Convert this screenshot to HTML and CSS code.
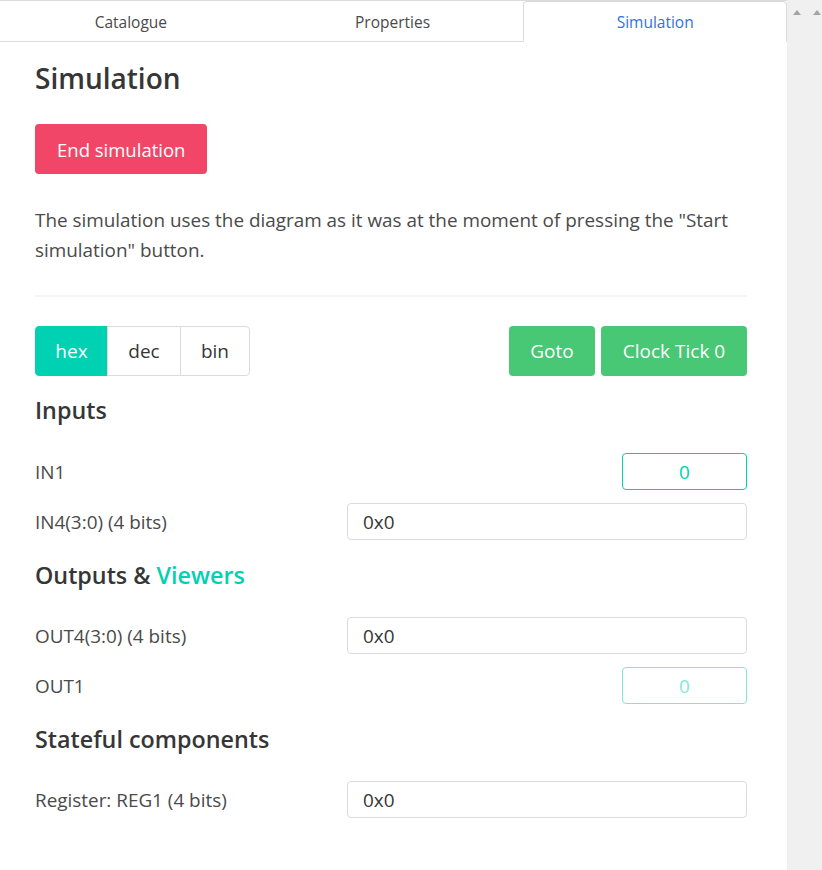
FILE: index.html
```html
<!DOCTYPE html>
<html>
<head>
<meta charset="utf-8">
<link rel="stylesheet" href="styles.css">
</head>
<body>
<div class="layout">
  <div class="panel">
    <div class="tabs">
      <div class="tab">Catalogue</div>
      <div class="tab">Properties</div>
      <div class="tab active">Simulation</div>
    </div>
    <div class="content">
      <h1 class="title">Simulation</h1>
      <button class="btn btn-danger">End simulation</button>
      <p class="desc">The simulation uses the diagram as it was at the moment of pressing the "Start simulation" button.</p>
      <hr class="divider">
      <div class="toolbar">
        <div class="seg">
          <button class="seg-btn selected">hex</button>
          <button class="seg-btn">dec</button>
          <button class="seg-btn">bin</button>
        </div>
        <div class="actions">
          <button class="btn btn-success">Goto</button>
          <button class="btn btn-success">Clock Tick 0</button>
        </div>
      </div>

      <h2 class="section first">Inputs</h2>
      <div class="row">
        <span class="label">IN1</span>
        <span class="bit">0</span>
      </div>
      <div class="row">
        <span class="label">IN4(3:0) (4 bits)</span>
        <span class="field">0x0</span>
      </div>

      <h2 class="section">Outputs &amp; <span class="accent">Viewers</span></h2>
      <div class="row">
        <span class="label">OUT4(3:0) (4 bits)</span>
        <span class="field">0x0</span>
      </div>
      <div class="row">
        <span class="label">OUT1</span>
        <span class="bit disabled">0</span>
      </div>

      <h2 class="section">Stateful components</h2>
      <div class="row">
        <span class="label">Register: REG1 (4 bits)</span>
        <span class="field">0x0</span>
      </div>
    </div>
  </div>
  <div class="side">
    <span class="tri"></span>
    <span class="tri"></span>
  </div>
</div>
</body>
</html>
```

FILE: styles.css
```css
* { box-sizing: border-box; }
html, body { margin: 0; padding: 0; background: #fff; }
body {
  font-family: "Open Sans", "Noto Sans", sans-serif;
  color: #4a4a4a;
  font-size: 16px;
}
.layout {
  display: flex;
  height: 870px;
  overflow: hidden;
}
.panel {
  width: 787px;
  flex: 0 0 787px;
}
.side {
  flex: 1;
  background: #f0f0f0;
  display: flex;
  gap: 12px;
  padding: 10px 0 0 6px;
  align-items: flex-start;
}
.tri {
  width: 0; height: 0;
  border-left: 4px solid transparent;
  border-right: 4px solid transparent;
  border-bottom: 5px solid #a3a3a3;
}
.tabs {
  display: flex;
  height: 42px;
  border-top: 1px solid #dbdbdb;
}
.tab {
  flex: 1;
  display: flex;
  align-items: center;
  justify-content: center;
  font-size: 15.5px;
  color: #4a4a4a;
  border-bottom: 1px solid #dbdbdb;
  padding-top: 1px;
}
.tab.active {
  color: #3273dc;
  border: 1px solid #dbdbdb;
  border-bottom-color: transparent;
  border-radius: 4px 4px 0 0;
}
.content {
  padding: 16px 40px 0 35px;
}
.title {
  margin: 0;
  font-size: 28px;
  font-weight: 600;
  color: #363636;
  line-height: 40px;
}
.btn {
  font-family: inherit;
  font-size: 18.5px;
  border: none;
  border-radius: 4px;
  color: #fff;
  height: 50px;
  padding: 0 22px;
  cursor: pointer;
}
.btn-danger {
  background: #f14668;
  margin-top: 26px;
  display: block;
}
.btn-success { background: #48c774; }
.desc {
  margin: 31px 0 0;
  font-size: 18.9px;
  line-height: 30px;
  color: #4a4a4a;
}
.divider {
  border: none;
  height: 2px;
  background: #f5f5f5;
  margin: 30px 0 29px;
}
.toolbar {
  display: flex;
  justify-content: space-between;
  align-items: center;
}
.seg { display: flex; }
.seg-btn {
  font-family: inherit;
  font-size: 19px;
  height: 50px;
  background: #fff;
  color: #363636;
  border: 1px solid #dbdbdb;
  margin-left: -1px;
  padding: 0;
}
.seg-btn:first-child { border-radius: 4px 0 0 4px; margin-left: 0; width: 73px; }
.seg-btn:nth-child(2) { width: 74px; }
.seg-btn:last-child { border-radius: 0 4px 4px 0; width: 70px; }
.seg-btn.selected {
  background: #00d1b2;
  border-color: #00d1b2;
  color: #fff;
}
.actions { display: flex; gap: 6px; }
.actions .btn { font-size: 19px; padding: 0; }
.actions .btn:first-child { width: 86px; }
.actions .btn:last-child { width: 146px; }
.section {
  margin: 20px 0 27px;
  font-size: 23.3px;
  font-weight: 600;
  color: #363636;
  line-height: 30px;
}
.section.first { margin-top: 19px; margin-bottom: 28px; }
.accent { color: #00d1b2; }
.row {
  display: flex;
  align-items: center;
  justify-content: space-between;
  height: 37px;
  margin-bottom: 13px;
}
.label {
  font-size: 18.9px;
  color: #4a4a4a;
}
.field {
  width: 400px;
  height: 37px;
  border: 1px solid #dbdbdb;
  border-radius: 4px;
  display: flex;
  align-items: center;
  padding-left: 15px;
  font-size: 18.9px;
  color: #363636;
}
.bit {
  width: 125px;
  height: 37px;
  border: 1px solid #00d1b2;
  border-radius: 4px;
  display: flex;
  align-items: center;
  justify-content: center;
  font-size: 18.9px;
  color: #00d1b2;
}
.bit.disabled { opacity: 0.5; }
```
